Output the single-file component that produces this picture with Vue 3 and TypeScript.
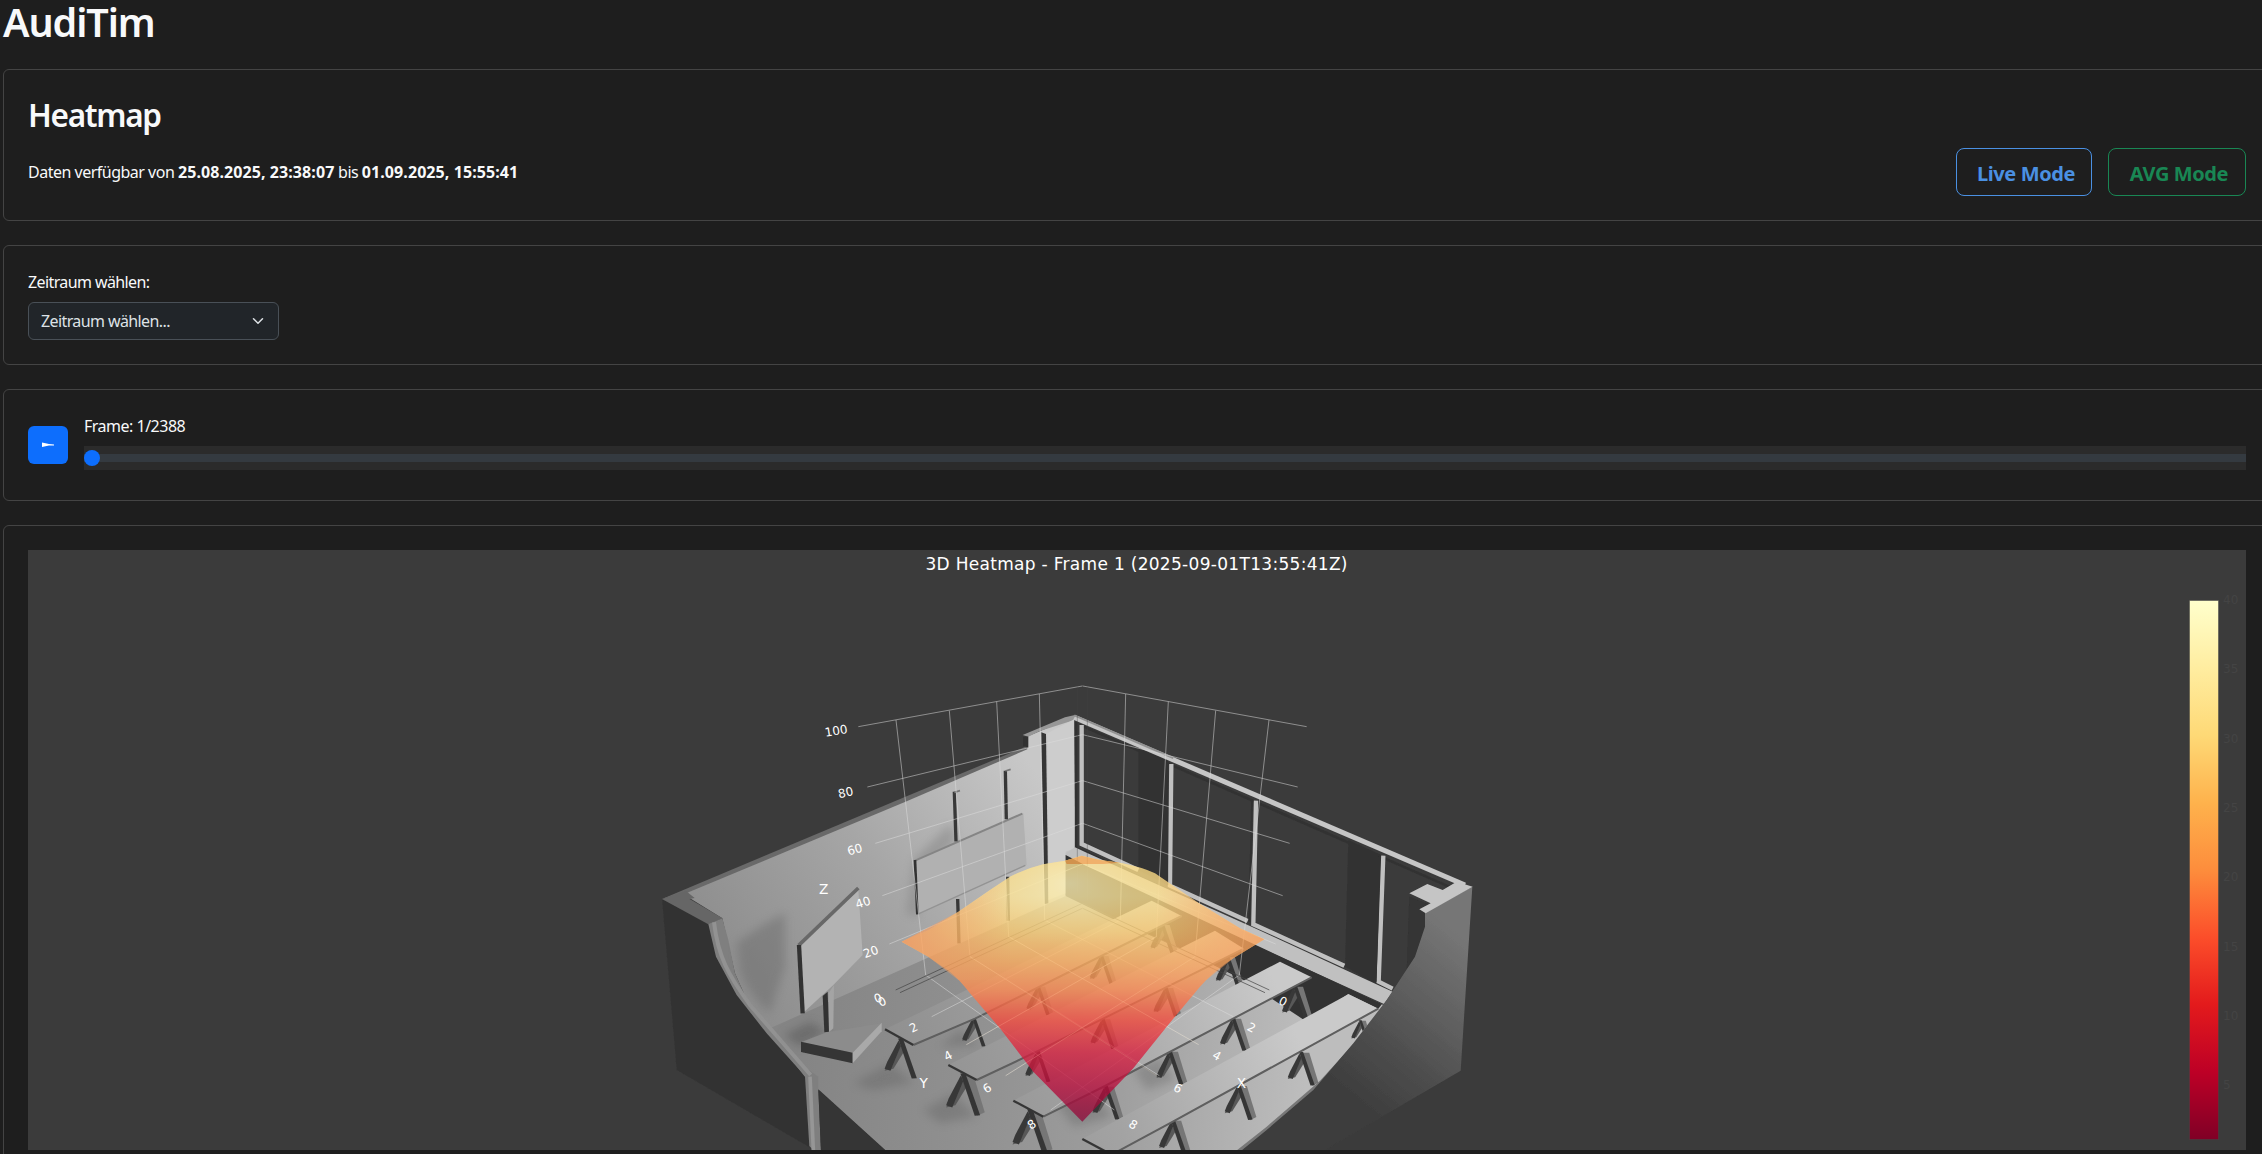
<script setup lang="ts">
interface Point { x: number; y: number }
interface Label extends Point { text: string; angle: number }
interface Leg extends Point { s: number }
interface Bench { top: string; end: string; edge: string; legs: Leg[] }

const MIRROR = 2655

const zTicks: Label[] = [
  { text: '100', x: 588, y: 212, angle: -9 },
  { text: '80', x: 617, y: 397, angle: -12 },
  { text: '60', x: 644, y: 568, angle: -15 },
  { text: '40', x: 669, y: 727, angle: -18 },
  { text: '20', x: 692, y: 875, angle: -20 },
  { text: '0', x: 714, y: 1014, angle: -24 },
]
const floorTicks: Label[] = [
  { text: '0', x: 726, y: 1024, angle: -26 },
  { text: '2', x: 820, y: 1102, angle: -27 },
  { text: '4', x: 924, y: 1187, angle: -29 },
  { text: '6', x: 1041, y: 1284, angle: -31 },
  { text: '8', x: 1175, y: 1393, angle: -33 },
]
const labels: Label[] = [
  ...zTicks,
  ...floorTicks,
  ...floorTicks.map((t) => ({ text: t.text, x: MIRROR - t.x, y: t.y, angle: -t.angle })),
]

const halfGrid: number[][] = [
  [655, 200, 1327, 78], [682, 381, 1327, 224], [706, 550, 1327, 362],
  [727, 707, 1327, 490], [748, 852, 1327, 612],
  [768, 180, 857, 945], [928, 152, 990, 890], [1070, 125, 1106, 830], [1198, 102, 1214, 780],
  [875, 1070, 1442, 780], [979, 1154, 1549, 830], [1097, 1247, 1665, 890], [1232, 1350, 1798, 945],
]
const halfZero: number[][] = [[767, 990, 1327, 730], [780, 998, 1327, 745]]
const mirrored = (lines: number[][]): number[][] => [
  ...lines,
  ...lines.map(([a, b, c, d]) => [MIRROR - a, b, MIRROR - c, d]),
]
const grid = mirrored(halfGrid)
const zero = mirrored(halfZero)

const benches: Bench[] = [
  {
    top: '735,1108 820,1155 1005,1076 1625,768 1535,722', end: '735,1108 820,1155', edge: '820,1155 1005,1076 1625,768',
    legs: [{ x: 780, y: 1138, s: 1.1 }, { x: 1000, y: 1074, s: 0.8 }, { x: 1193, y: 980, s: 0.8 }, { x: 1383, y: 888, s: 0.8 }, { x: 1566, y: 795, s: 0.82 }],
  },
  {
    top: '925,1215 1010,1260 1190,1175 1812,866 1725,812', end: '925,1215 1010,1260', edge: '1010,1260 1190,1175 1812,866',
    legs: [{ x: 967, y: 1243, s: 1.16 }, { x: 1192, y: 1174, s: 0.86 }, { x: 1387, y: 1078, s: 0.84 }, { x: 1576, y: 984, s: 0.84 }, { x: 1762, y: 892, s: 0.82 }],
  },
  {
    top: '1120,1322 1210,1370 1395,1278 2015,952 1920,905', end: '1120,1322 1210,1370', edge: '1210,1370 1395,1278 2015,952',
    legs: [{ x: 1168, y: 1350, s: 1.2 }, { x: 1396, y: 1280, s: 0.92 }, { x: 1588, y: 1175, s: 0.92 }, { x: 1778, y: 1076, s: 0.9 }, { x: 1964, y: 980, s: 0.9 }],
  },
  {
    top: '1327,1437 1415,1484 1600,1384 2215,1046 2125,1003', end: '1327,1437 1415,1484', edge: '1415,1484 1600,1384 2215,1046',
    legs: [{ x: 1597, y: 1382, s: 0.95 }, { x: 1794, y: 1278, s: 0.95 }, { x: 1982, y: 1178, s: 0.92 }, { x: 2160, y: 1082, s: 0.62 }],
  },
]

const barTicks = [40, 35, 30, 25, 20, 15, 10, 5].map((value, i) => ({ value, y: 604 + i * 69.3 }))
</script>

<template>
  <main class="page">
    <h1 class="brand">AudiTim</h1>

    <section class="card intro">
      <h2 class="title">Heatmap</h2>
      <div class="intro-row">
        <p class="range-text">Daten verfügbar von <b>25.08.2025, 23:38:07</b> bis <b>01.09.2025, 15:55:41</b></p>
        <div class="modes">
          <button class="mode live">Live Mode</button>
          <button class="mode avg">AVG Mode</button>
        </div>
      </div>
    </section>

    <section class="card period">
      <label class="label">Zeitraum wählen:</label>
      <div class="select">
        <span>Zeitraum wählen...</span>
        <svg width="12" height="12" viewBox="0 0 16 16" fill="none" stroke="#dee2e6" stroke-width="2" stroke-linecap="round" stroke-linejoin="round"><path d="m2 5 6 6 6-6" /></svg>
      </div>
    </section>

    <section class="card player">
      <button class="play" aria-label="Play">
        <svg width="12" height="6" viewBox="0 0 12 6"><path d="M0 .6 7 1.9l5 .7v.9H7L0 5Z" fill="#fff" /></svg>
      </button>
      <div class="timeline">
        <span class="frame">Frame: 1/2388</span>
        <div class="slider"><div class="track"></div><div class="thumb"></div></div>
      </div>
    </section>

    <section class="card chart">
      <svg class="plot" width="2218" height="600" viewBox="28 550 2218 600">
        <defs>
          <linearGradient id="bar" x1="0" y1="1" x2="0" y2="0">
            <stop offset="0" stop-color="rgb(128,0,38)" /><stop offset=".125" stop-color="rgb(189,0,38)" />
            <stop offset=".25" stop-color="rgb(227,26,28)" /><stop offset=".375" stop-color="rgb(252,78,42)" />
            <stop offset=".5" stop-color="rgb(253,141,60)" /><stop offset=".625" stop-color="rgb(254,178,76)" />
            <stop offset=".75" stop-color="rgb(254,217,118)" /><stop offset=".875" stop-color="rgb(255,237,160)" />
            <stop offset="1" stop-color="rgb(255,255,204)" />
          </linearGradient>
          <linearGradient id="wall" gradientUnits="userSpaceOnUse" x1="300" y1="1000" x2="1200" y2="350">
            <stop offset="0" stop-color="#8d8d8d" /><stop offset=".5" stop-color="#a6a6a6" /><stop offset="1" stop-color="#c8c8c8" />
          </linearGradient>
          <linearGradient id="floor" gradientUnits="userSpaceOnUse" x1="500" y1="1100" x2="2000" y2="1200">
            <stop offset="0" stop-color="#858585" /><stop offset=".3" stop-color="#8f8f8f" /><stop offset=".6" stop-color="#9c9c9c" /><stop offset="1" stop-color="#bdbdbd" />
          </linearGradient>
          <linearGradient id="plank" gradientUnits="userSpaceOnUse" x1="800" y1="1400" x2="1900" y2="950">
            <stop offset="0" stop-color="#8e8e8e" /><stop offset=".5" stop-color="#a3a3a3" /><stop offset="1" stop-color="#cacaca" />
          </linearGradient>
          <linearGradient id="side" gradientUnits="userSpaceOnUse" x1="2490" y1="850" x2="2110" y2="1310">
            <stop offset="0" stop-color="#767676" /><stop offset=".3" stop-color="#646464" /><stop offset=".65" stop-color="#4e4e4e" /><stop offset="1" stop-color="#3c3c3c" />
          </linearGradient>
          <linearGradient id="surface" gradientUnits="userSpaceOnUse" x1="0" y1="590" x2="0" y2="1385">
            <stop offset="0" stop-color="#ffd878" /><stop offset=".15" stop-color="#ffe392" /><stop offset=".28" stop-color="#ffcf75" />
            <stop offset=".4" stop-color="#fead5e" /><stop offset=".5" stop-color="#fd8a50" /><stop offset=".62" stop-color="#f54a3d" />
            <stop offset=".74" stop-color="#d9203f" /><stop offset=".87" stop-color="#b80d3c" /><stop offset="1" stop-color="#8d0d3c" />
          </linearGradient>
          <radialGradient id="peak" gradientUnits="userSpaceOnUse" cx="0" cy="0" r="1" gradientTransform="translate(1290 670) scale(330 190)">
            <stop offset="0" stop-color="#fffac8" stop-opacity=".7" /><stop offset=".45" stop-color="#fff0ac" stop-opacity=".42" /><stop offset="1" stop-color="#ffdf88" stop-opacity="0" />
          </radialGradient>
          <linearGradient id="corners" gradientUnits="userSpaceOnUse" x1="785" y1="0" x2="1873" y2="0">
            <stop offset="0" stop-color="#fe9f5c" /><stop offset=".3" stop-color="#fe9f5c" stop-opacity="0" />
            <stop offset=".7" stop-color="#fe9f5c" stop-opacity="0" /><stop offset="1" stop-color="#fea25a" />
          </linearGradient>
          <clipPath id="inside"><path d="M0 0H2600V850L2355 800 2325 890 2240 1020 2140 1150 2020 1290 1880 1410 1800 1470H0Z" /></clipPath>
          <filter id="soft" x="-2%" y="-2%" width="104%" height="104%"><feGaussianBlur stdDeviation="1.6" /></filter>
          <filter id="shade" x="-50%" y="-50%" width="200%" height="200%"><feGaussianBlur stdDeviation="14" /></filter>
        </defs>

        <rect x="28" y="550" width="2218" height="600" fill="#3b3b3b" />
        <text x="925.5" y="570" class="verdana" font-size="17" fill="#fff" textLength="422">3D Heatmap - Frame 1 (2025-09-01T13:55:41Z)</text>

        <g transform="translate(640 660) scale(.33333)">
          <g filter="url(#soft)">
            <!-- left outer block -->
            <path d="M66 717 205 790 228 890 290 1005 380 1120 495 1248 508 1462 110 1230Z" fill="#333" />
            <!-- floor -->
            <path d="M380 1105 830 905 1277 705 1500 700 2230 1035 2165 1130 2040 1270 1880 1410 1800 1475H740L535 1290 495 1250Z" fill="url(#floor)" />
            <!-- left wall -->
            <path d="M135 693 800 420 1155 265 1165 228 1303 170 1306 575 1277 585V708L830 908 390 1105 325 1030 285 940 247 775 150 715Z" fill="url(#wall)" />
            <path d="M66 717 800 409 1162 258V268L800 424 140 699Z" fill="#696969" />
            <path d="M66 717 137 692 164 714 149 717 248 775 205 793Z" fill="#666" />
            <path d="M205 792 247 775 265 840 285 940 325 1030 395 1105 500 1225 535 1250V1290L543 1475H525L508 1458 495 1248 380 1120 290 1005 228 890Z" fill="#7f7f7f" />
            <path d="M222 787C234 890 265 945 330 1035L395 1110 512 1245" fill="none" stroke="#929292" stroke-width="12" />
            <path d="M510 1250 520 1470" stroke="#969696" stroke-width="11" />
            <path d="M535 1288 740 1474H543Z" fill="#343434" />
            <path d="M290 850Q370 790 435 760V920L390 1060Q330 1010 300 935Z" fill="#666" opacity=".42" filter="url(#shade)" />
            <path d="M430 1125 510 1085 560 1115 480 1160Z" fill="#555" opacity=".5" filter="url(#shade)" />
            <path d="M800 765 822 600 930 490 950 540 840 650 835 765Z" fill="#777" opacity=".4" filter="url(#shade)" />
            <g fill="#555" opacity=".3" filter="url(#shade)">
              <path d="M640 1270 750 1210 820 1268 700 1290Z" /><path d="M850 1350 940 1300 1010 1370 900 1390Z" />
              <path d="M900 1160 960 1110 1020 1155Z" /><path d="M1250 1330 1350 1290 1420 1370 1300 1400Z" />
              <path d="M1480 1230 1560 1190 1610 1260 1520 1290Z" />
            </g>

            <!-- wall column and notch -->
            <path d="M1148 225 1275 172 1305 165 1303 180 1200 213 1165 230Z" fill="#979797" />
            <path d="M1149 230H1165V264L1149 258Z" fill="#333" />
            <path d="M1204 217 1218 222 1225 730 1214 732Z" fill="#343434" />
            <path d="M1222 220 1303 178 1305 565 1277 575V700L1226 720Z" fill="#cdcdcd" />

            <!-- wall board -->
            <path d="M825 600 1150 460 1160 615 832 763Z" fill="#b1b1b1" />
            <path d="M825 602 1147 461" stroke="#858585" stroke-width="6" />
            <path d="M832 763 1156 616" stroke="#939393" stroke-width="4" />
            <path d="M825 600 832 763" stroke="#333" stroke-width="8" />
            <g stroke="#393939" stroke-width="10">
              <path d="M943 395 948 544" /><path d="M1096 332 1099 478" /><path d="M953 717 957 850" /><path d="M1103 650 1105 782" />
            </g>
            <path d="M943 397 960 392M1096 333 1112 328" stroke="#777" stroke-width="5" />

            <!-- lectern sign -->
            <path d="M478 855 655 690 668 885 580 975 490 1058Z" fill="#b3b3b3" />
            <path d="M476 856 655 684" stroke="#686868" stroke-width="11" />
            <path d="M477 855 488 1060" stroke="#333" stroke-width="13" />
            <path d="M566 1000 582 975 580 1105 566 1117Z" fill="#a4a4a4" /><path d="M548 1008 563 995 567 1115 553 1117Z" fill="#333" />
            <path d="M483 1147 560 1117 725 1090 638 1178Z" fill="#8c8c8c" />
            <path d="M483 1145 638 1178V1210L483 1176Z" fill="#353535" /><path d="M638 1178 725 1088V1114L638 1210Z" fill="#a9a9a9" />

            <!-- window wall -->
            <path d="M1303 178 2460 680 2355 900 2230 1010 1306 585Z" fill="#3a3a3a" />
            <path d="M1495 265 1585 300V675L1495 630Z" fill="#333" />
            <path d="M2125 540 2230 588 2215 965 2240 990 2115 920Z" fill="#333" />
            <path d="M2308 710 2372 735 2355 800 2325 890 2300 940Z" fill="#343434" />
            <path d="M1309 185V565L2260 1000" fill="none" stroke="#303030" stroke-width="9" />
            <path d="M1320 195 2450 690" stroke="#313131" stroke-width="7" />
            <g fill="none" stroke="#c0c0c0" stroke-width="13">
              <path d="M1325 195V552L1495 630" /><path d="M1594 312 1590 677 1823 783" />
              <path d="M1848 422 1840 793 2113 917" /><path d="M2230 587 2216 965 2258 986" />
            </g>
            <g stroke="#313131" stroke-width="5">
              <path d="M1582 312V675M1836 422 1828 785M2219 587 2207 965" />
            </g>
            <path d="M1303 172 2475 675" stroke="#c6c6c6" stroke-width="15" />
            <path d="M1303 166 1600 294" stroke="#929292" stroke-width="6" />

            <!-- ledge -->
            <path d="M1277 580 1305 562 1340 578 1830 798 2258 995 2232 1032 1880 872 1340 622 1277 590Z" fill="#c0c0c0" />
            <path d="M1277 585 1340 618 2226 1032 2215 1046 2125 1002 2000 1085 1810 960 1610 860 1425 780 1277 708Z" fill="#323232" />

            <!-- benches -->
            <g clip-path="url(#inside)">
              <g v-for="(b, i) in benches" :key="i">
                <g v-for="(l, j) in b.legs" :key="j" :transform="`translate(${l.x} ${l.y}) scale(${l.s})`">
                  <path d="M-2 5 10 35-18 80-42 86Z" fill="#585858" />
                  <path d="M-4 3 2 18-26 86-42 80-35 62Z" fill="#383838" />
                  <path v-if="i + j > 0 && (i > 1 || j !== 1)" d="M-2 0H28L58 98 38 108Z" fill="#767676" />
                  <path d="M-5-2H8L46 106 32 107Z" fill="#363636" />
                </g>
                <polygon :points="b.top" fill="url(#plank)" />
                <polyline :points="b.edge" fill="none" stroke="#5e5e5e" stroke-width="6" />
                <polyline :points="b.end" fill="none" stroke="#363636" stroke-width="7" />
              </g>
            </g>

            <!-- right outer block -->
            <path d="M2165 1126 2040 1262 1880 1400 1785 1475H1830L1905 1415 2050 1280 2170 1145Z" fill="#777" />
            <path d="M2497 680 2462 1232 2080 1455 2050 1475H1800L1880 1410 2020 1290 2140 1150 2240 1020 2325 890 2355 800V758Z" fill="url(#side)" />
            <path d="M2450 665 2498 680 2357 760 2338 748 2372 730 2308 700 2362 672 2408 690Z" fill="#c5c5c5" />
          </g>

          <!-- axis grid -->
          <g stroke="#ddd" stroke-opacity=".58" stroke-width="2.7">
            <line v-for="(l, i) in grid" :key="i" :x1="l[0]" :y1="l[1]" :x2="l[2]" :y2="l[3]" />
          </g>
          <g stroke="#444" stroke-opacity=".85" stroke-width="2.5">
            <line v-for="(l, i) in zero" :key="i" :x1="l[0]" :y1="l[1]" :x2="l[2]" :y2="l[3]" />
          </g>
          <path d="M1312 80V700M1342 80V720" stroke="#444" stroke-width="2" opacity=".55" />

          <!-- heat surface -->
          <g opacity=".78">
            <path d="M785 845 865 810 955 755 1050 690 1110 650Q1160 625 1210 613L1275 602 1325 587 1380 600 1440 608Q1510 622 1545 640L1670 725 1800 805 1873 838 1780 895Q1725 930 1680 980L1580 1100 1480 1225 1327 1385 1180 1235 1080 1105 990 1000Q960 960 930 935L865 890Z" fill="url(#surface)" />
            <path d="M785 845 865 810 955 755 1050 690 1110 650Q1160 625 1210 613L1275 602 1325 587 1380 600 1440 608Q1510 622 1545 640L1670 725 1800 805 1873 838 1780 895Q1725 930 1680 980L1480 990H980L930 935 865 890Z" fill="url(#peak)" />
            <path d="M785 845 955 755 1110 650V960H955L865 890ZM1545 640 1670 725 1800 805 1873 838 1780 895 1700 960H1545Z" fill="url(#corners)" />
            <path d="M1275 602 1325 587 1380 600 1440 608 1390 612H1280Z" fill="#feae55" />
          </g>
          <g stroke="#ffe0b0" stroke-opacity=".16" stroke-width="2.5">
            <line x1="990" y1="890" x2="1550" y2="1247" /><line x1="1665" y1="890" x2="1097" y2="1247" />
            <line x1="1106" y1="830" x2="1676" y2="1154" /><line x1="1549" y1="830" x2="979" y2="1154" />
          </g>

          <g class="verdana" fill="#fff" text-anchor="middle">
            <text v-for="(t, i) in labels" :key="i" font-size="36" y="13" :transform="`translate(${t.x} ${t.y}) rotate(${t.angle})`">{{ t.text }}</text>
            <text font-size="41" x="551" y="702">Z</text>
            <text font-size="41" x="851" y="1284">Y</text>
            <text font-size="41" x="1804" y="1284">X</text>
          </g>
        </g>

        <rect x="2189.5" y="600.5" width="29" height="539" fill="url(#bar)" stroke="#444" stroke-opacity=".5" />
        <g class="verdana" font-size="12" fill="#444">
          <text v-for="t in barTicks" :key="t.value" x="2223" :y="t.y">{{ t.value }}</text>
        </g>
      </svg>
    </section>
  </main>
</template>

<style>
html { overflow: hidden; background: #1e1e1e; }
body { margin: 0; }
</style>

<style scoped>
.page {
  box-sizing: border-box;
  width: 2271px;
  padding-left: 3px;
  background: #1e1e1e;
  color: #f8f9fa;
  font-family: "Noto Sans", "Open Sans", sans-serif;
  font-size: 16px;
  line-height: 24px;
}
.brand { margin: 0; height: 69px; line-height: 44px; font-size: 39.5px; font-weight: 600; letter-spacing: -1.1px; }
.card { box-sizing: border-box; margin-bottom: 24px; padding: 24px; border: 1px solid #444; border-radius: 6px; }
.intro { height: 152px; }
.title { margin: 0 0 16px; height: 38px; line-height: 41px; font-size: 31.5px; font-weight: 600; letter-spacing: -1.3px; }
.intro-row { display: flex; justify-content: space-between; align-items: center; height: 48px; }
.range-text { margin: 0; letter-spacing: -.5px; white-space: nowrap; }
.range-text b { letter-spacing: .08px; }
.modes { display: flex; gap: 16px; }
.mode {
  box-sizing: border-box; height: 48px; padding: 2px 0 0 4px; background: none; border: 1px solid; border-radius: 8px;
  font-family: inherit; font-size: 20px; font-weight: 700; letter-spacing: -.4px; white-space: nowrap;
}
.live { width: 136px; color: #4a90e2; border-color: #4a90e2; }
.avg { width: 138px; color: #198754; border-color: #198754; }
.period { height: 120px; }
.label { display: block; margin-bottom: 8px; letter-spacing: -.6px; }
.select {
  box-sizing: border-box; display: flex; align-items: center; justify-content: space-between;
  width: 251px; height: 38px; padding: 0 14px 0 12px; background: #212529; border: 1px solid #495057; border-radius: 6px;
  color: #dee2e6; letter-spacing: -.6px;
}
.player { height: 112px; display: flex; align-items: center; gap: 16px; }
.play { display: flex; align-items: center; justify-content: center; width: 40px; height: 38px; padding: 0; border: 0; border-radius: 6px; background: #0d6efd; }
.timeline { flex: 1; display: flex; flex-direction: column; gap: 8px; padding-bottom: 6px; }
.frame { letter-spacing: -.5px; }
.slider { position: relative; display: flex; align-items: center; height: 24px; background: #2b2b2b; }
.track { flex: 1; height: 8px; background: #343a40; }
.thumb { position: absolute; left: 0; top: 4px; width: 16px; height: 16px; border-radius: 50%; background: #0d6efd; }
.chart { height: 650px; margin-bottom: 0; }
.plot { display: block; }
.verdana { font-family: Verdana, "DejaVu Sans", sans-serif; }
</style>
